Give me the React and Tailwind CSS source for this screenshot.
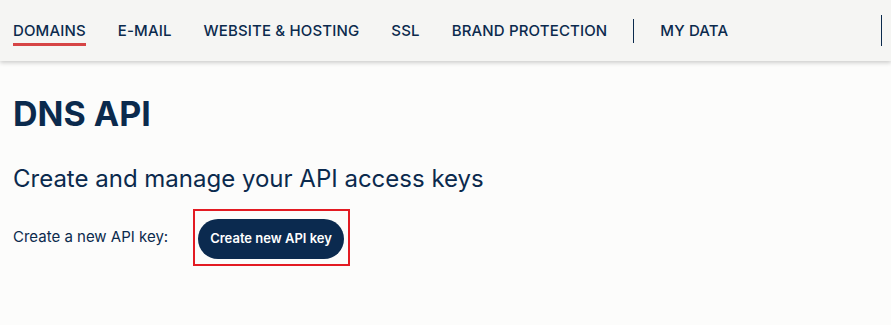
import React from 'react';

const navItems = ['DOMAINS', 'E-MAIL', 'WEBSITE & HOSTING', 'SSL', 'BRAND PROTECTION'];

const App = () => {
    return (
        <div className="min-h-[325px] bg-[#fcfcfb] text-[#0b2a4d]" style={{ fontFamily: 'Inter, "Noto Sans", sans-serif' }}>
            <header className="h-[61px] bg-[#f5f5f3] shadow-[0_2px_4px_rgba(0,0,0,0.18)] flex items-center pl-[13px] relative">
                <nav className="flex items-center gap-[32px] text-[15px] tracking-[0.15px] font-medium">
                    {navItems.map((item, i) => (
                        <a key={i} className="relative leading-[20px]">
                            {item}
                            {i === 0 && <span className="absolute left-0 right-0 top-[22px] h-[3px] bg-[#d64545]" />}
                        </a>
                    ))}
                </nav>
                <div className="w-px h-[24px] bg-[#0b2a4d] ml-[26px]" />
                <a className="ml-[26px] text-[15px] tracking-[0.15px] font-medium leading-[20px]">MY DATA</a>
                <div className="w-px h-[31px] bg-[#0b2a4d] ml-auto mr-[9px]" />
            </header>

            <main className="px-[13px]">
                <h1 className="text-[34px] font-bold leading-none mt-[36px]">DNS API</h1>
                <h2 className="text-[24px] font-normal mt-[36px] leading-none">Create and manage your API access keys</h2>
                <div className="flex items-center mt-[18px]">
                    <span className="text-[15px]">Create a new API key:</span>
                    <div className="ml-[25px] border-2 border-[#e31b23] pl-[3px] pr-[4px] pt-[8px] pb-[5px]">
                        <button className="h-[40px] px-[12px] rounded-full bg-[#0b2a4f] text-white text-[13px] font-semibold">
                            Create new API key
                        </button>
                    </div>
                </div>
            </main>
        </div>
    );
};

export default App;
